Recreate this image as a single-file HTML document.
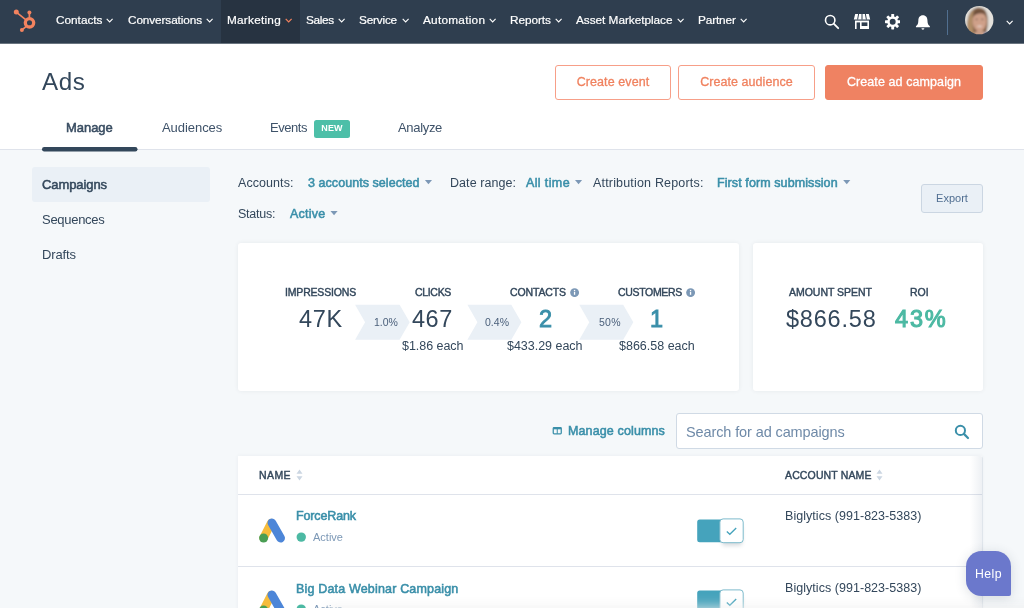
<!DOCTYPE html>
<html lang="en">
<head>
<meta charset="utf-8">
<title>Ads</title>
<style>
html,body{margin:0;padding:0;}
html{background:#f5f8fa;overflow:hidden;}
body{width:1024px;height:608px;overflow:hidden;position:relative;background:#f5f8fa;font-family:"Liberation Sans",sans-serif;color:#33475b;}
.a{position:absolute;white-space:nowrap;line-height:1;}
span.a,div.t{will-change:transform;}
#nav{left:0;top:0;width:1024px;height:44px;background:#2f3e4f;border-bottom:1px solid #69747f;box-sizing:border-box;}
#navactive{left:221px;top:0;width:79px;height:43px;background:#273341;}
.ni{color:#fff;font-size:11.8px;top:14.6px;-webkit-text-stroke:0.2px #fff;}
.chev{top:18px;width:8px;height:6px;}
#head{left:0;top:44px;width:1024px;height:105px;background:#fff;border-bottom:1px solid #dfe3eb;}
.tab{font-size:13px;top:120.5px;color:#3e5269;}
.btn{box-sizing:border-box;border:1px solid #f79f88;border-radius:3px;color:#f0825f;-webkit-text-stroke:0.3px #f0825f;background:#fff;font-size:12.5px;text-align:center;height:35px;top:65px;line-height:32px;}
.side{font-size:13px;left:42px;}
.flt{font-size:12.5px;}
.lnk{color:#3a8fa9;-webkit-text-stroke:0.55px #3a8fa9;}
.caret{width:8px;height:5px;background:#7c98b6;clip-path:polygon(0.4px 0.5px,7.5px 0.5px,3.95px 4.6px);}
.card{background:#fff;border-radius:3px;box-shadow:0 0 4px rgba(45,62,80,.08);}
.lbl{font-size:10.5px;color:#33475b;-webkit-text-stroke:0.42px #33475b;}
.big{font-size:23.5px;color:#33475b;margin-top:0.5px;}
.big.lnk{color:#3a8fa9;-webkit-text-stroke:0.9px #3a8fa9;font-size:23.5px;}
.sub{font-size:12.5px;color:#33475b;}
.pct{font-size:10.5px;color:#4a5f7a;}
.th{font-size:10.5px;color:#33475b;-webkit-text-stroke:0.42px #33475b;}
.td{font-size:12.5px;}
</style>
</head>
<body>
<!-- NAV -->
<div class="a" id="nav"></div>
<div class="a" id="navactive"></div>
<svg class="a" style="left:0;top:0" width="44" height="44" viewBox="0 0 44 44">
  <g fill="none" stroke="#f3835f" stroke-linecap="round">
    <line x1="16.3" y1="12.2" x2="25.6" y2="19.6" stroke-width="1.7"/>
    <line x1="29.4" y1="12.6" x2="29.4" y2="17.5" stroke-width="1.7"/>
    <line x1="22" y1="29.9" x2="26.3" y2="26.3" stroke-width="1.7"/>
  </g>
  <circle cx="29.5" cy="22.8" r="4.2" fill="none" stroke="#f3835f" stroke-width="3.3"/>
  <circle cx="16.3" cy="12.1" r="2.5" fill="#f3835f"/>
  <circle cx="29.4" cy="12.5" r="2" fill="#f3835f"/>
  <circle cx="21.9" cy="30" r="2" fill="#f3835f"/>
</svg>
<span class="a ni" style="left:55.5px;letter-spacing:-0.008px">Contacts</span>
<span class="a ni" style="left:127.5px;letter-spacing:-0.109px">Conversations</span>
<span class="a ni" style="left:227.0px;letter-spacing:0.243px">Marketing</span>
<span class="a ni" style="left:306.2px;letter-spacing:-0.353px">Sales</span>
<span class="a ni" style="left:359.2px;letter-spacing:-0.192px">Service</span>
<span class="a ni" style="left:422.8px;letter-spacing:0.256px">Automation</span>
<span class="a ni" style="left:510.0px;letter-spacing:-0.080px">Reports</span>
<span class="a ni" style="left:576.2px;letter-spacing:-0.032px">Asset Marketplace</span>
<span class="a ni" style="left:698.2px;letter-spacing:-0.134px">Partner</span>
<svg class="a chev" style="left:105.9px" viewBox="0 0 8 6"><path d="M0.7 0.9 L3.65 3.9 L6.6 0.9" fill="none" stroke="#fff" stroke-width="1.1"/></svg>
<svg class="a chev" style="left:206px" viewBox="0 0 8 6"><path d="M0.7 0.9 L3.65 3.9 L6.6 0.9" fill="none" stroke="#fff" stroke-width="1.1"/></svg>
<svg class="a chev" style="left:285px" viewBox="0 0 8 6"><path d="M0.7 0.9 L3.65 3.9 L6.6 0.9" fill="none" stroke="#f3835f" stroke-width="1.25"/></svg>
<svg class="a chev" style="left:337.7px" viewBox="0 0 8 6"><path d="M0.7 0.9 L3.65 3.9 L6.6 0.9" fill="none" stroke="#fff" stroke-width="1.1"/></svg>
<svg class="a chev" style="left:401.5px" viewBox="0 0 8 6"><path d="M0.7 0.9 L3.65 3.9 L6.6 0.9" fill="none" stroke="#fff" stroke-width="1.1"/></svg>
<svg class="a chev" style="left:489px" viewBox="0 0 8 6"><path d="M0.7 0.9 L3.65 3.9 L6.6 0.9" fill="none" stroke="#fff" stroke-width="1.1"/></svg>
<svg class="a chev" style="left:554.7px" viewBox="0 0 8 6"><path d="M0.7 0.9 L3.65 3.9 L6.6 0.9" fill="none" stroke="#fff" stroke-width="1.1"/></svg>
<svg class="a chev" style="left:676.7px" viewBox="0 0 8 6"><path d="M0.7 0.9 L3.65 3.9 L6.6 0.9" fill="none" stroke="#fff" stroke-width="1.1"/></svg>
<svg class="a chev" style="left:740px" viewBox="0 0 8 6"><path d="M0.7 0.9 L3.65 3.9 L6.6 0.9" fill="none" stroke="#fff" stroke-width="1.1"/></svg>

<!-- HEADER -->
<div class="a" id="head"></div>
<span class="a" style="left:42.0px;top:70px;font-size:24.2px;color:#33475b;letter-spacing:0.604px">Ads</span>
<div class="a t btn" style="left:555px;width:116px;letter-spacing:0.098px">Create event</div>
<div class="a t btn" style="left:678px;width:137px;letter-spacing:0.051px">Create audience</div>
<div class="a t btn" style="left:825px;width:158px;background:#ef8262;border-color:#ef8262;color:#fff;-webkit-text-stroke:0.3px #fff;letter-spacing:0.093px">Create ad campaign</div>
<span class="a tab" style="left:66.2px;-webkit-text-stroke:0.5px #33475b;letter-spacing:-0.039px">Manage</span>
<span class="a tab" style="left:161.5px;letter-spacing:-0.052px">Audiences</span>
<span class="a tab" style="left:270.0px;letter-spacing:-0.458px">Events</span>
<span class="a" style="left:313.5px;top:120px;width:36px;height:17.5px;background:#4dbfa8;border-radius:2.5px;color:#fff;font-size:9px;font-weight:bold;line-height:17.5px;text-align:center;letter-spacing:0.167px">NEW</span>
<span class="a tab" style="left:398.0px;letter-spacing:-0.323px">Analyze</span>
<svg class="a" style="left:40px;top:145px" width="100" height="8" viewBox="40 145 100 8"><rect x="42" y="147" width="95.5" height="4.4" rx="2.2" fill="#33475b"/></svg>

<!-- SIDEBAR -->
<div class="a" style="left:32px;top:167px;width:178px;height:35px;background:#eaf0f6;border-radius:3px"></div>
<span class="a side" style="top:178px;-webkit-text-stroke:0.5px #33475b;letter-spacing:-0.085px">Campaigns</span>
<span class="a side" style="top:213px;letter-spacing:-0.285px">Sequences</span>
<span class="a side" style="top:248px;letter-spacing:-0.112px">Drafts</span>

<!-- NAV RIGHT ICONS -->
<svg class="a" style="left:824px;top:14px" width="16" height="16" viewBox="0 0 16 16"><circle cx="6.2" cy="6.2" r="4.7" fill="none" stroke="#fff" stroke-width="1.6"/><line x1="9.7" y1="9.7" x2="14.2" y2="14.2" stroke="#fff" stroke-width="1.8" stroke-linecap="round"/></svg>
<svg class="a" style="left:853px;top:13px" width="18" height="17" viewBox="0 0 18 17">
  <path d="M2.2 1 L15.8 1 L17.2 6.6 L0.8 6.6 Z" fill="#fff"/>
  <g stroke="#2f3e4f" stroke-width="1"><line x1="5.6" y1="1" x2="4.6" y2="6.6"/><line x1="9" y1="1" x2="9" y2="6.6"/><line x1="12.4" y1="1" x2="13.4" y2="6.6"/></g>
  <path d="M2 7.6 H16 V16 H2 Z" fill="#fff"/>
  <rect x="3.6" y="9.4" width="3.4" height="6.6" fill="#2f3e4f"/>
  <rect x="8.6" y="9.4" width="5.8" height="3.6" fill="#2f3e4f"/>
</svg>
<svg class="a" style="left:885px;top:14.2px" width="15.4" height="15.4" viewBox="0 0 16 16">
  <g transform="translate(8 8)" fill="#fff">
    <rect x="-1.5" y="-8" width="3" height="16" rx="0.6"/>
    <rect x="-1.5" y="-8" width="3" height="16" rx="0.6" transform="rotate(45)"/>
    <rect x="-1.5" y="-8" width="3" height="16" rx="0.6" transform="rotate(90)"/>
    <rect x="-1.5" y="-8" width="3" height="16" rx="0.6" transform="rotate(135)"/>
    <circle r="5.6"/>
  </g>
  <circle cx="8" cy="8" r="3.1" fill="#2f3e4f"/>
</svg>
<svg class="a" style="left:915.3px;top:13.6px" width="15.8" height="17.5" viewBox="0 0 17 18">
  <path d="M8.5 1 C5.2 1 3.6 3.6 3.6 6.6 C3.6 10 2.6 11.6 1 12.8 L1 13.8 L16 13.8 L16 12.8 C14.4 11.6 13.4 10 13.4 6.6 C13.4 3.6 11.8 1 8.5 1 Z" fill="#fff"/>
  <path d="M6.9 15 H10.1 A1.6 1.6 0 0 1 6.9 15 Z" fill="#fff"/>
</svg>
<div class="a" style="left:947px;top:10px;width:1px;height:25px;background:#516f90"></div>
<svg class="a" style="left:964px;top:5px" width="31" height="31" viewBox="964 5 31 31">
  <defs><clipPath id="av"><circle cx="979.25" cy="20.1" r="14.2"/></clipPath><filter id="bl" x="-10%" y="-10%" width="120%" height="120%"><feGaussianBlur stdDeviation="0.9"/></filter></defs>
  <g clip-path="url(#av)"><g filter="url(#bl)">
    <rect x="960" y="0" width="40" height="40" fill="#e4e1dc"/>
    <path d="M968 36 C966 24 967 9 978 7.5 C987 7 988.6 16 987.4 27 L985.5 36 Z" fill="#7b5a42"/>
    <path d="M967.5 34 C966.5 24 968 13 974 9.5 C972 16 972 26 974.5 35 Z" fill="#b18e68"/>
    <ellipse cx="979.6" cy="21.5" rx="7.1" ry="9.8" fill="#cfa089"/>
    <path d="M972.5 17 C973.5 10 983 8.5 986.6 16 C984 12.5 977 12 972.5 17 Z" fill="#644634"/>
    <path d="M974 33 C977 30 983 30 986 33 L986 37 L974 37 Z" fill="#caa089"/>
    <path d="M984 33 C987 31.5 990 32.5 991 36 L984 37 Z" fill="#9aa4c6"/>
    <ellipse cx="979.6" cy="26.3" rx="2.6" ry="0.9" fill="#e9d3cb"/>
    <ellipse cx="976.6" cy="19.3" rx="1.2" ry="0.6" fill="#6e5245"/>
    <ellipse cx="982.4" cy="19.3" rx="1.2" ry="0.6" fill="#6e5245"/>
  </g></g>
</svg>
<svg class="a chev" style="left:1006.3px;top:20.3px" viewBox="0 0 8 6"><path d="M0.7 0.9 L3.65 3.9 L6.6 0.9" fill="none" stroke="#fff" stroke-width="1.1"/></svg>

<!-- FILTERS -->
<span class="a flt" style="left:238.2px;top:176.7px;letter-spacing:0.068px">Accounts:</span>
<span class="a flt lnk" style="left:307.8px;top:176.7px;letter-spacing:0.053px">3 accounts selected</span>
<div class="a caret" style="left:424.5px;top:179.6px"></div>
<span class="a flt" style="left:449.5px;top:176.7px;letter-spacing:0.061px">Date range:</span>
<span class="a flt lnk" style="left:525.8px;top:176.7px;letter-spacing:0.376px">All time</span>
<div class="a caret" style="left:574.6px;top:179.6px"></div>
<span class="a flt" style="left:592.8px;top:176.7px;letter-spacing:0.177px">Attribution Reports:</span>
<span class="a flt lnk" style="left:717.0px;top:176.7px;letter-spacing:0.092px">First form submission</span>
<div class="a caret" style="left:842.8px;top:179.6px"></div>
<span class="a flt" style="left:238.2px;top:207.7px;letter-spacing:-0.239px">Status:</span>
<span class="a flt lnk" style="left:289.5px;top:207.7px;letter-spacing:0.242px">Active</span>
<div class="a caret" style="left:330.1px;top:210.6px"></div>
<div class="a t" style="left:921px;top:184px;width:60px;height:27px;border:1px solid #cbd6e2;border-radius:3px;background:#eaf0f6;font-size:11px;color:#506e91;text-align:center;line-height:27px;letter-spacing:0.017px">Export</div>

<!-- CARD 1 -->
<div class="a card" style="left:238px;top:243px;width:501px;height:148px"></div>
<svg class="a" style="left:350px;top:300px" width="290" height="44" viewBox="350 300 290 44"><g fill="#eaf0f6">
  <path d="M355.1 304.8 H399.6 L409.7 322.3 L399.6 339.8 H355.1 L365.1 322.3 Z"/>
  <path d="M467.4 304.8 H511.3 L521.4 322.3 L511.3 339.8 H467.4 L477.4 322.3 Z"/>
  <path d="M579.3 304.8 H623.2 L633.3 322.3 L623.2 339.8 H579.3 L589.3 322.3 Z"/>
</g></svg>
<span class="a lbl" style="left:285.0px;top:287.3px;letter-spacing:-0.176px">IMPRESSIONS</span>
<span class="a big" style="left:299.0px;top:307px;letter-spacing:0.724px">47K</span>
<span class="a pct" style="left:373.8px;top:317px;letter-spacing:-0.047px">1.0%</span>
<span class="a lbl" style="left:414.5px;top:287.3px;letter-spacing:-0.323px">CLICKS</span>
<span class="a big" style="left:411.5px;top:307px;letter-spacing:0.510px">467</span>
<span class="a sub" style="left:402.0px;top:340px;letter-spacing:-0.036px">$1.86 each</span>
<span class="a pct" style="left:485.2px;top:317px;letter-spacing:0.016px">0.4%</span>
<span class="a lbl" style="left:510.0px;top:287.3px;letter-spacing:-0.123px">CONTACTS</span>
<span class="a big lnk" style="left:538.5px;top:307px">2</span>
<span class="a sub" style="left:507.0px;top:340px;letter-spacing:-0.022px">$433.29 each</span>
<span class="a pct" style="left:598.8px;top:317px;letter-spacing:0.240px">50%</span>
<span class="a lbl" style="left:617.8px;top:287.3px;letter-spacing:-0.323px">CUSTOMERS</span>
<span class="a big lnk" style="left:649.5px;top:307px">1</span>
<span class="a sub" style="left:619.0px;top:340px;letter-spacing:-0.002px">$866.58 each</span>
<svg class="a" style="left:570px;top:288px" width="9" height="9" viewBox="0 0 9 9"><circle cx="4.6" cy="4.6" r="4.45" fill="#7c98b6"/><rect x="3.9" y="3.8" width="1.3" height="3" fill="#fff"/><rect x="3.9" y="1.9" width="1.3" height="1.2" fill="#fff"/></svg>
<svg class="a" style="left:686px;top:288px" width="9" height="9" viewBox="0 0 9 9"><circle cx="4.6" cy="4.6" r="4.45" fill="#7c98b6"/><rect x="3.9" y="3.8" width="1.3" height="3" fill="#fff"/><rect x="3.9" y="1.9" width="1.3" height="1.2" fill="#fff"/></svg>

<!-- CARD 2 -->
<div class="a card" style="left:753px;top:243px;width:230px;height:148px"></div>
<span class="a lbl" style="left:789.0px;top:287.3px;letter-spacing:-0.020px">AMOUNT SPENT</span>
<span class="a big" style="left:785.5px;top:307px;letter-spacing:0.792px">$866.58</span>
<span class="a lbl" style="left:910.0px;top:287.3px;letter-spacing:-0.057px">ROI</span>
<span class="a big" style="left:894.5px;top:307px;color:#4cb9a3;-webkit-text-stroke:1.1px #4cb9a3;letter-spacing:1.818px">43%</span>

<!-- TABLE TOOLBAR -->
<svg class="a" style="left:552px;top:427px" width="10.5" height="7.6" viewBox="0 0 11 9"><rect x="0.75" y="0.75" width="9.5" height="7.5" rx="1" fill="none" stroke="#3a8fa9" stroke-width="1.5"/><line x1="5.5" y1="2" x2="5.5" y2="8" stroke="#3a8fa9" stroke-width="1.2"/><rect x="0.75" y="0.75" width="9.5" height="2" fill="#3a8fa9"/></svg>
<span class="a flt lnk" style="left:568.0px;top:425.2px;letter-spacing:0.129px">Manage columns</span>
<div class="a" style="left:676px;top:413px;width:305px;height:34px;border:1px solid #d0dae5;border-radius:3px;background:#fff"></div>
<span class="a" style="left:685.5px;top:424.7px;font-size:14.5px;color:#6f8aa8;letter-spacing:-0.113px">Search for ad campaigns</span>
<svg class="a" style="left:954px;top:424px" width="16" height="16" viewBox="0 0 16 16"><circle cx="6.4" cy="6.4" r="4.6" fill="none" stroke="#3a8fa9" stroke-width="2"/><line x1="9.9" y1="9.9" x2="14" y2="14" stroke="#3a8fa9" stroke-width="2.2" stroke-linecap="round"/></svg>

<!-- TABLE -->
<div class="a" style="left:238px;top:456px;width:744px;height:160px;background:#fff;box-shadow:0 0 4px rgba(45,62,80,.06)"></div>
<div class="a" style="left:238px;top:494px;width:744px;height:1px;background:#dfe3eb"></div>
<div class="a" style="left:238px;top:566px;width:744px;height:1px;background:#dfe3eb"></div>
<span class="a th" style="left:259.0px;top:469.8px;letter-spacing:0.414px">NAME</span>
<svg class="a" style="left:295.7px;top:468.7px" width="7" height="12" viewBox="0 0 7 12"><path d="M3.5 0.5 L6.5 4.8 H0.5 Z M3.5 11.5 L6.5 7.2 H0.5 Z" fill="#cbd6e2"/></svg>
<span class="a th" style="left:784.5px;top:469.8px;letter-spacing:0.135px">ACCOUNT NAME</span>
<svg class="a" style="left:876px;top:468.7px" width="7" height="12" viewBox="0 0 7 12"><path d="M3.5 0.5 L6.5 4.8 H0.5 Z M3.5 11.5 L6.5 7.2 H0.5 Z" fill="#cbd6e2"/></svg>

<!-- ROW 1 -->
<svg class="a" style="left:0;top:0" width="0" height="0"><defs><filter id="tb" x="-50%" y="-50%" width="200%" height="200%"><feGaussianBlur stdDeviation="2"/></filter></defs></svg>
<svg class="a" style="left:255px;top:514px" width="34" height="32" viewBox="255 514 34 32">
  <line x1="271.2" y1="523" x2="263.6" y2="537.9" stroke="#f6bc3b" stroke-width="8.4" stroke-linecap="round"/>
  <line x1="271.9" y1="522.9" x2="280.6" y2="538.1" stroke="#4d86d8" stroke-width="8.8" stroke-linecap="round"/>
  <circle cx="263.6" cy="538" r="4.5" fill="#4a9e54"/>
</svg>
<svg class="a" style="left:295px;top:531px" width="13" height="13" viewBox="295 531 13 13"><circle cx="301.25" cy="537.1" r="4.7" fill="#4cb9a3"/></svg>
<svg class="a" style="left:690px;top:510.5px" width="62" height="40" viewBox="690 510 62 40">
  <rect x="697.2" y="518.6" width="40" height="22.6" rx="2.5" fill="#45a3bc"/>
  <rect x="722" y="523" width="20" height="21.5" rx="3" fill="#2d3e50" opacity="0.2" filter="url(#tb)"/>
  <rect x="719.9" y="517.9" width="23.3" height="23.8" rx="3.2" fill="#fff" stroke="#7dbbcc" stroke-width="1"/>
  <path d="M726.8 530.6 L729.8 533.3 L736.2 527" fill="none" stroke="#45a3bc" stroke-width="1.3"/>
</svg>
<span class="a td lnk" style="left:296.0px;top:510px;letter-spacing:-0.127px">ForceRank</span>
<span class="a" style="left:313.0px;top:532.2px;font-size:11px;color:#7c98b6;letter-spacing:0.005px">Active</span>
<span class="a td" style="left:784.5px;top:510px;letter-spacing:0.042px">Biglytics (991-823-5383)</span>

<!-- ROW 2 -->
<svg class="a" style="left:255px;top:586px" width="34" height="32" viewBox="255 514 34 32">
  <line x1="271.2" y1="523" x2="263.6" y2="537.9" stroke="#f6bc3b" stroke-width="8.4" stroke-linecap="round"/>
  <line x1="271.9" y1="522.9" x2="280.6" y2="538.1" stroke="#4d86d8" stroke-width="8.8" stroke-linecap="round"/>
  <circle cx="263.6" cy="538" r="4.5" fill="#4a9e54"/>
</svg>
<svg class="a" style="left:295px;top:603px" width="13" height="13" viewBox="295 531 13 13"><circle cx="301.25" cy="537.1" r="4.7" fill="#4cb9a3"/></svg>
<svg class="a" style="left:690px;top:582.4px" width="62" height="40" viewBox="690 510 62 40">
  <rect x="697.2" y="518.6" width="40" height="22.6" rx="2.5" fill="#45a3bc"/>
  <rect x="722" y="523" width="20" height="21.5" rx="3" fill="#2d3e50" opacity="0.2" filter="url(#tb)"/>
  <rect x="719.9" y="517.9" width="23.3" height="23.8" rx="3.2" fill="#fff" stroke="#7dbbcc" stroke-width="1"/>
  <path d="M726.8 530.6 L729.8 533.3 L736.2 527" fill="none" stroke="#45a3bc" stroke-width="1.3"/>
</svg>
<span class="a td lnk" style="left:296.0px;top:582.8px;letter-spacing:0.172px">Big Data Webinar Campaign</span>
<span class="a" style="left:313.0px;top:604.2px;font-size:11px;color:#7c98b6;letter-spacing:0.005px">Active</span>
<span class="a td" style="left:784.5px;top:582px;letter-spacing:0.042px">Biglytics (991-823-5383)</span>

<!-- TABLE EDGE SHADOW + BOTTOM FADE -->
<div class="a" style="left:970px;top:456px;width:13px;height:160px;border-radius:0 3px 0 0;background:linear-gradient(to right,rgba(81,111,144,0),rgba(81,111,144,.11))"></div>
<div class="a" style="left:336px;top:616px;width:800px;height:30px;background:#eee;box-shadow:0 0 12px 8px rgba(238,238,238,.96)"></div>
<!-- HELP -->
<div class="a t" style="left:966px;top:551px;width:45px;height:45.4px;background:#6b78cc;border-radius:15.6px 15.6px 2px 15.6px;color:#fff;font-size:12.3px;text-align:center;line-height:47.8px;box-shadow:0 2px 12px rgba(45,62,80,.16);letter-spacing:0.475px">Help</div>

</body>
</html>
